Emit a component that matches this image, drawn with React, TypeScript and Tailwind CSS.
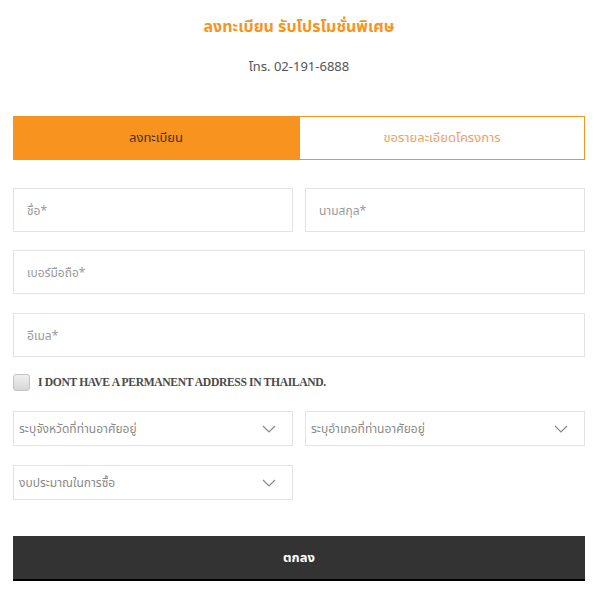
const thai = { fontFamily: '"Noto Sans", "Noto Sans Thai", Tahoma, sans-serif' };

function TextInput({ placeholder, className = '' }: { placeholder: string; className?: string }) {
  return (
    <input
      type="text"
      placeholder={placeholder}
      style={thai}
      className={`h-[44px] w-full border border-[#e3e3e3] bg-white px-[13px] text-[12px] text-[#555] outline-none placeholder:text-[#9a9a9a] ${className}`}
    />
  );
}

function SelectBox({ label }: { label: string }) {
  return (
    <div
      style={thai}
      className="flex h-[35px] w-full items-center justify-between border border-[#e3e3e3] bg-white pl-[5px] pr-[16px] text-[12px] text-[#8a8a8a]"
    >
      <span>{label}</span>
      <svg width="14" height="8" viewBox="0 0 14 8" fill="none" stroke="#8a8a8a" strokeWidth={1.2}>
        <polyline points="1,1 7,7 13,1" />
      </svg>
    </div>
  );
}

export default function App() {
  return (
    <div className="min-h-[599px] w-[600px] bg-white pl-[13px] pr-[15px]">
      <div className="flex flex-col items-center pt-[15px]">
        <h1 style={thai} className="text-[16px] font-bold leading-[22px] text-[#f7941d]">
          ลงทะเบียน รับโปรโมชั่นพิเศษ
        </h1>
        <p style={thai} className="mt-[20px] text-[13px] leading-[18px] text-[#555]">
          โทร. 02-191-6888
        </p>
      </div>

      <div className="mt-[41px] grid h-[44px] grid-cols-2">
        <button
          type="button"
          style={thai}
          className="flex items-center justify-center bg-[#f7931e] text-[13px] text-[#4a3217]"
        >
          ลงทะเบียน
        </button>
        <button
          type="button"
          style={thai}
          className="flex items-center justify-center border border-[#f7931e] bg-white text-[13px] text-[#f0a263]"
        >
          ขอรายละเอียดโครงการ
        </button>
      </div>

      <div className="mt-[28px] grid grid-cols-2 gap-x-[12px]">
        <TextInput placeholder="ชื่อ*" />
        <TextInput placeholder="นามสกุล*" />
      </div>
      <TextInput placeholder="เบอร์มือถือ*" className="mt-[18px]" />
      <TextInput placeholder="อีเมล*" className="mt-[19px]" />

      <label className="mt-[17px] flex items-center gap-[8px]">
        <span className="h-[17px] w-[17px] rounded-[3px] border border-[#c4c4c4] bg-gradient-to-b from-[#f0f0f0] to-[#d6d6d6]" />
        <span
          style={{ fontFamily: '"Liberation Serif", "Times New Roman", serif' }}
          className="text-[11.6px] font-bold uppercase tracking-[-0.35px] text-[#4a4a4a]"
        >
          I DONT HAVE A PERMANENT ADDRESS IN THAILAND.
        </span>
      </label>

      <div className="mt-[20px] grid grid-cols-2 gap-x-[12px]">
        <SelectBox label="ระบุจังหวัดที่ท่านอาศัยอยู่" />
        <SelectBox label="ระบุอำเภอที่ท่านอาศัยอยู่" />
      </div>
      <div className="mt-[19px] grid grid-cols-2 gap-x-[12px]">
        <SelectBox label="งบประมาณในการซื้อ" />
      </div>

      <button
        type="button"
        style={thai}
        className="mt-[36px] flex h-[45px] w-full items-center justify-center border-b-2 border-black bg-[#333333] text-[13px] font-bold text-white"
      >
        ตกลง
      </button>
    </div>
  );
}
